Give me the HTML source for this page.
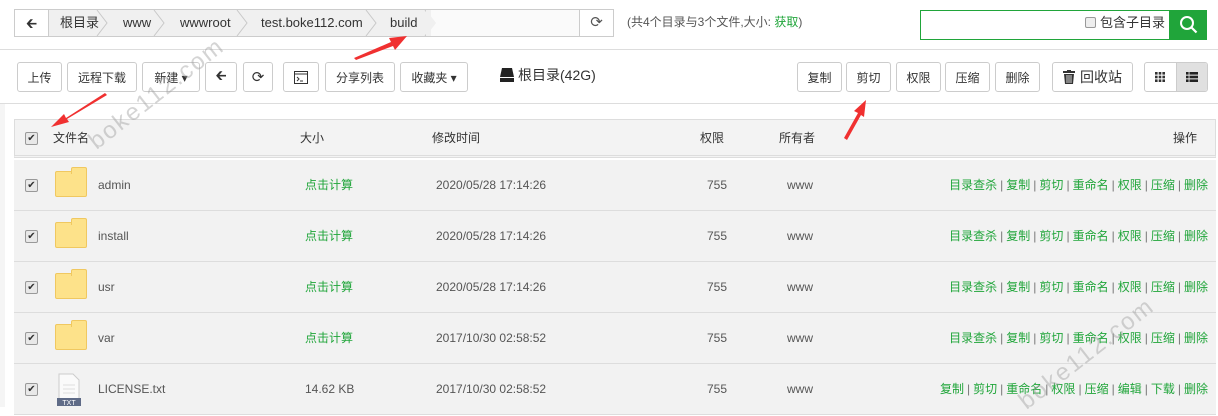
<!DOCTYPE html>
<html><head><meta charset="utf-8"><style>
*{box-sizing:border-box;margin:0;padding:0}
body{width:1218px;height:407px;overflow:hidden;background:#fff;font-family:"Liberation Sans","Noto Sans CJK SC",sans-serif;font-size:12px;color:#555;position:relative}
.a{position:absolute;line-height:1.2}
.btn{position:absolute;top:62px;height:30px;border:1px solid #ccc;border-radius:3px;background:#fff;color:#333;font-size:12px;display:flex;align-items:center;justify-content:center}
.row{position:absolute;left:14px;width:1202px;height:51px;background:#f2f2f2;border-bottom:1px solid #ddd}
.cb{position:absolute;width:13px;height:13px;border:1px solid #999;border-radius:2px;background:#e8e8e8;font-size:10px;line-height:11px;text-align:center;color:#333}
.fold{position:absolute;left:41px;top:11px;width:32px;height:26px;background:#fde28a;border:1px solid #f0c860;border-radius:2px}
.fold:before{content:"";position:absolute;right:-1px;top:-5px;width:14px;height:6px;background:#fde28a;border:1px solid #f0c860;border-bottom:none;border-radius:2px 2px 0 0}
.t{position:absolute;top:0;height:50px;line-height:50px;font-size:12px;color:#555}
.g{color:#20a53a}
.t.g{color:#20a53a}
.op{position:absolute;right:8px;top:0;line-height:50px;color:#20a53a;font-size:12px;white-space:nowrap}
.op i{font-style:normal;color:#777;margin:0 3px}
.h{position:absolute;top:119px;line-height:38px;color:#333;font-size:12px}
</style></head><body>
<!-- breadcrumb -->
<div class="a" style="left:14px;top:9px;width:600px;height:28px;border:1px solid #ccc;background:#fafafa"></div>
<div class="a" style="left:15px;top:10px;width:34px;height:26px;border-right:1px solid #ccc;background:#fff;font-size:14px;text-align:center;line-height:26px;color:#333">&#129136;</div>
<div class="a" style="left:49px;top:10px;width:382px;height:26px;background:#f0f0f0"></div>
<svg class="a" style="left:0;top:9px" width="450" height="28"><g fill="none" stroke="#c8c8c8"><path d="M97 1l10 13-10 13M154 1l10 13-10 13M237 1l10 13-10 13M366 1l10 13-10 13M425 1l10 13-10 13"/></g><path d="M426 1l10 13-10 13V1z" fill="#f0f0f0"/></svg>
<div class="a" style="left:60px;top:15px;font-size:13px;color:#333">根目录</div>
<div class="a" style="left:123px;top:15px;font-size:13px;color:#333">www</div>
<div class="a" style="left:180px;top:15px;font-size:13px;color:#333">wwwroot</div>
<div class="a" style="left:261px;top:15px;font-size:13px;color:#333">test.boke112.com</div>
<div class="a" style="left:390px;top:15px;font-size:13px;color:#333">build</div>
<div class="a" style="left:579px;top:10px;width:34px;height:26px;border-left:1px solid #ccc;background:#fff;text-align:center;line-height:26px;font-size:15px;color:#555">&#10227;</div>
<div class="a" style="left:627px;top:15px;font-size:12px;color:#555">(共4个目录与3个文件,大小: <span class="g">获取</span>)</div>
<!-- search -->
<div class="a" style="left:920px;top:10px;width:250px;height:30px;border:1px solid #20a53a;background:#fff"></div>
<div class="a" style="left:1085px;top:17px;width:11px;height:11px;border:1px solid #999;border-radius:2px;background:#eee"></div>
<div class="a" style="left:1100px;top:15px;font-size:13px;color:#333">包含子目录</div>
<div class="a" style="left:1169px;top:10px;width:38px;height:30px;background:#20a53a"></div>
<svg class="a" style="left:1179px;top:15px" width="20" height="20"><circle cx="8" cy="8" r="6" fill="none" stroke="#fff" stroke-width="2"/><path d="M12.5 12.5l5 5" stroke="#fff" stroke-width="2.2"/></svg>
<div class="a" style="left:0;top:49px;width:1218px;height:1px;background:#ddd"></div>
<!-- toolbar -->
<div class="btn" style="left:17px;width:45px">上传</div>
<div class="btn" style="left:67px;width:70px">远程下载</div>
<div class="btn" style="left:142px;width:58px">新建 ▾</div>
<div class="btn" style="left:205px;width:32px;font-size:14px">&#129136;</div>
<div class="btn" style="left:243px;width:30px;font-size:15px">&#10227;</div>
<div class="btn" style="left:283px;width:36px"><svg width="14" height="13"><rect x="0.5" y="0.5" width="13" height="12" fill="none" stroke="#333"/><path d="M0 3h14" stroke="#333"/><path d="M3 6l2 2-2 2M6 10h3" stroke="#333" fill="none"/></svg></div>
<div class="btn" style="left:325px;width:70px">分享列表</div>
<div class="btn" style="left:400px;width:68px">收藏夹 ▾</div>
<svg class="a" style="left:500px;top:68px" width="14" height="14"><path d="M2 0h10l2 9H0z" fill="#222"/><rect x="0" y="10" width="14" height="4" fill="#222"/></svg>
<div class="a" style="left:518px;top:67px;font-size:14px;color:#333">根目录(42G)</div>
<div class="btn" style="left:797px;width:45px">复制</div>
<div class="btn" style="left:846px;width:45px">剪切</div>
<div class="btn" style="left:896px;width:45px">权限</div>
<div class="btn" style="left:945px;width:45px">压缩</div>
<div class="btn" style="left:995px;width:45px">删除</div>
<div class="btn" style="left:1052px;width:81px;font-size:14px"><svg width="12" height="14" style="margin-right:5px"><rect x="0" y="1" width="12" height="2" fill="#333"/><rect x="4" y="0" width="4" height="2" fill="#333"/><path d="M1 4h10l-1 10H2z" fill="#333"/><path d="M4 5v8M6 5v8M8 5v8" stroke="#fff" stroke-width="0.8"/></svg>回收站</div>
<div class="btn" style="left:1144px;width:64px;overflow:hidden;justify-content:flex-start">
<div style="width:32px;height:30px;display:flex;align-items:center;justify-content:center"><svg width="10" height="10"><g fill="#333"><rect x="0" y="0" width="2.6" height="2.6"/><rect x="3.7" y="0" width="2.6" height="2.6"/><rect x="7.4" y="0" width="2.6" height="2.6"/><rect x="0" y="3.7" width="2.6" height="2.6"/><rect x="3.7" y="3.7" width="2.6" height="2.6"/><rect x="7.4" y="3.7" width="2.6" height="2.6"/><rect x="0" y="7.4" width="2.6" height="2.6"/><rect x="3.7" y="7.4" width="2.6" height="2.6"/><rect x="7.4" y="7.4" width="2.6" height="2.6"/></g></svg></div>
<div style="width:32px;height:30px;background:#e0e0e0;border-left:1px solid #ccc;display:flex;align-items:center;justify-content:center"><svg width="12" height="10"><g fill="#222"><rect x="0" y="0" width="2.6" height="2.6"/><rect x="3.5" y="0" width="8.5" height="2.6"/><rect x="0" y="3.7" width="2.6" height="2.6"/><rect x="3.5" y="3.7" width="8.5" height="2.6"/><rect x="0" y="7.4" width="2.6" height="2.6"/><rect x="3.5" y="7.4" width="8.5" height="2.6"/></g></svg></div></div>
<div class="a" style="left:0;top:103px;width:1218px;height:1px;background:#ddd"></div>
<div class="a" style="left:0;top:104px;width:5px;height:303px;background:#f5f5f5"></div>
<!-- header -->
<div class="a" style="left:14px;top:119px;width:1202px;height:39px;background:#f3f3f3;border:1px solid #ddd;border-bottom:3px double #ddd"></div>
<div class="cb" style="left:25px;top:132px">✔</div>
<div class="h" style="left:53px">文件名</div>
<div class="h" style="left:300px">大小</div>
<div class="h" style="left:432px">修改时间</div>
<div class="h" style="left:700px">权限</div>
<div class="h" style="left:779px">所有者</div>
<div class="h" style="left:1173px">操作</div>
<!-- rows -->
<div class="row" style="top:160px"><div class="cb" style="left:11px;top:19px">✔</div><div class="fold"></div><div class="t" style="left:84px">admin</div><div class="t g" style="left:291px">点击计算</div><div class="t" style="left:422px">2020/05/28 17:14:26</div><div class="t" style="left:693px">755</div><div class="t" style="left:773px">www</div><div class="op">目录查杀<i>|</i>复制<i>|</i>剪切<i>|</i>重命名<i>|</i>权限<i>|</i>压缩<i>|</i>删除</div></div>
<div class="row" style="top:211px"><div class="cb" style="left:11px;top:19px">✔</div><div class="fold"></div><div class="t" style="left:84px">install</div><div class="t g" style="left:291px">点击计算</div><div class="t" style="left:422px">2020/05/28 17:14:26</div><div class="t" style="left:693px">755</div><div class="t" style="left:773px">www</div><div class="op">目录查杀<i>|</i>复制<i>|</i>剪切<i>|</i>重命名<i>|</i>权限<i>|</i>压缩<i>|</i>删除</div></div>
<div class="row" style="top:262px"><div class="cb" style="left:11px;top:19px">✔</div><div class="fold"></div><div class="t" style="left:84px">usr</div><div class="t g" style="left:291px">点击计算</div><div class="t" style="left:422px">2020/05/28 17:14:26</div><div class="t" style="left:693px">755</div><div class="t" style="left:773px">www</div><div class="op">目录查杀<i>|</i>复制<i>|</i>剪切<i>|</i>重命名<i>|</i>权限<i>|</i>压缩<i>|</i>删除</div></div>
<div class="row" style="top:313px"><div class="cb" style="left:11px;top:19px">✔</div><div class="fold"></div><div class="t" style="left:84px">var</div><div class="t g" style="left:291px">点击计算</div><div class="t" style="left:422px">2017/10/30 02:58:52</div><div class="t" style="left:693px">755</div><div class="t" style="left:773px">www</div><div class="op">目录查杀<i>|</i>复制<i>|</i>剪切<i>|</i>重命名<i>|</i>权限<i>|</i>压缩<i>|</i>删除</div></div>
<div class="row" style="top:364px"><div class="cb" style="left:11px;top:19px">✔</div>
<svg class="a" style="left:43px;top:9px" width="26" height="33"><path d="M2 1h14l6 6v25H2z" fill="#fafafa" stroke="#ccc"/><path d="M6 12h12M6 16h12M6 20h12" stroke="#ddd"/><rect x="0" y="25" width="24" height="8" fill="#5f6b87"/><text x="12" y="32" font-size="7" fill="#fff" text-anchor="middle" font-family="Liberation Sans">TXT</text></svg>
<div class="t" style="left:84px">LICENSE.txt</div><div class="t" style="left:291px">14.62 KB</div><div class="t" style="left:422px">2017/10/30 02:58:52</div><div class="t" style="left:693px">755</div><div class="t" style="left:773px">www</div><div class="op">复制<i>|</i>剪切<i>|</i>重命名<i>|</i>权限<i>|</i>压缩<i>|</i>编辑<i>|</i>下载<i>|</i>删除</div></div>
<!-- watermarks -->
<div class="a" style="left:75px;top:80px;transform:rotate(-38deg);font-size:24px;color:rgba(160,160,160,.45);letter-spacing:2px">boke112.com</div>
<div class="a" style="left:1005px;top:340px;transform:rotate(-38deg);font-size:24px;color:rgba(160,160,160,.45);letter-spacing:2px">boke112.com</div>
<!-- arrows -->
<svg class="a" style="left:0;top:0" width="1218" height="407"><g fill="#f03030">
<polygon points="354,58 391,42 389,38 407,36 395,50 393,46 356,60"/>
<polygon points="105,93 66,118 64,114 51,127 69,122 67,119 107,95"/>
<polygon points="844,138 858,113 854,111 866,100 864,117 861,115 847,140"/>
</g></svg>
</body></html>
